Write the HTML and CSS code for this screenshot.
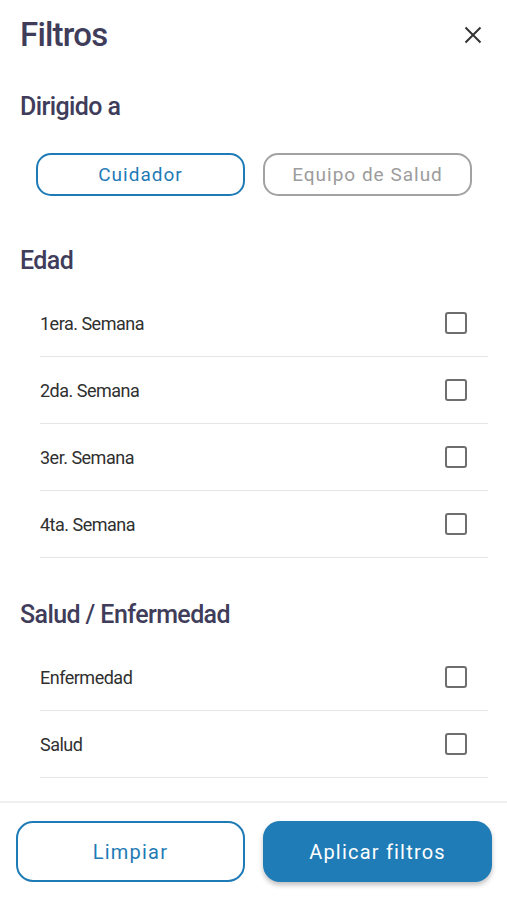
FILE: index.html
```html
<!DOCTYPE html>
<html lang="es">
<head>
<meta charset="utf-8">
<title>Filtros</title>
<link rel="stylesheet" href="styles.css">
</head>
<body>
<div class="page">
  <main class="content">
    <header class="header">
      <h1 class="title">Filtros</h1>
      <button class="close" aria-label="Cerrar">
        <svg width="18" height="18" viewBox="0 0 18 18"><path d="M1.5 1.5L16.5 16.5M16.5 1.5L1.5 16.5" stroke="#333" stroke-width="2" stroke-linecap="butt" fill="none"/></svg>
      </button>
    </header>

    <section class="section">
      <h2 class="heading">Dirigido a</h2>
      <div class="pills">
        <button class="pill pill-active">Cuidador</button>
        <button class="pill">Equipo de Salud</button>
      </div>
    </section>

    <section class="section section-edad">
      <h2 class="heading">Edad</h2>
      <ul class="list">
        <li class="row"><span>1era. Semana</span><span class="check"></span></li>
        <li class="row"><span>2da. Semana</span><span class="check"></span></li>
        <li class="row"><span>3er. Semana</span><span class="check"></span></li>
        <li class="row"><span>4ta. Semana</span><span class="check"></span></li>
      </ul>
    </section>

    <section class="section section-salud">
      <h2 class="heading">Salud / Enfermedad</h2>
      <ul class="list">
        <li class="row"><span>Enfermedad</span><span class="check"></span></li>
        <li class="row"><span>Salud</span><span class="check"></span></li>
      </ul>
    </section>
  </main>

  <footer class="footer">
    <button class="btn btn-outline">Limpiar</button>
    <button class="btn btn-fill">Aplicar filtros</button>
  </footer>
</div>
</body>
</html>
```

FILE: styles.css
```css
* { box-sizing: border-box; }
html, body { margin: 0; padding: 0; background: #fff; }
body {
  font-family: Roboto, "Liberation Sans", sans-serif;
  color: #333;
}
.page {
  height: 100vh;
  display: flex;
  flex-direction: column;
}
.content {
  flex: 1;
  padding: 15px 19px 0 20px;
}
.header {
  display: flex;
  align-items: center;
  justify-content: space-between;
  height: 40px;
}
.title {
  margin: 0;
  font-size: 33px;
  line-height: 40px;
  font-weight: 500;
  letter-spacing: -0.8px;
  color: #403d5b;
}
.close {
  border: 0;
  background: none;
  padding: 0;
  margin-right: 6px;
  width: 18px;
  height: 18px;
  display: flex;
}
.section { margin-top: 37px; }
.section-edad { margin-top: 50px; }
.section-salud { margin-top: 42px; }
.heading {
  margin: 0;
  font-size: 25px;
  line-height: 30px;
  font-weight: 500;
  letter-spacing: -0.6px;
  color: #403d5b;
}
.pills {
  display: grid;
  grid-template-columns: 1fr 1fr;
  gap: 18px;
  margin: 31px 16px 0;
}
.pill {
  height: 43px;
  border-radius: 15px;
  border: 2px solid #a2a2a2;
  background: #fff;
  font-family: Roboto, "Liberation Sans", sans-serif;
  font-size: 19px;
  letter-spacing: 1px;
  color: #9c9c9c;
  padding: 0;
}
.pill-active {
  border-color: #1f7bb6;
  color: #1f7bb6;
}
.list {
  list-style: none;
  margin: 14px 0 0;
  padding: 0 0 0 20px;
}
.row {
  height: 67px;
  display: flex;
  align-items: center;
  justify-content: space-between;
  border-bottom: 1px solid #e6e6e6;
  padding-right: 21px;
  font-size: 18px;
  color: #2f2f2f;
  letter-spacing: -0.5px;
}
.check {
  width: 22px;
  height: 22px;
  border: 2px solid #6e6e6e;
  border-radius: 3px;
}
.footer {
  border-top: 2px solid #efefef;
  display: grid;
  grid-template-columns: 1fr 1fr;
  gap: 18px;
  padding: 18px 15px 18px 16px;
}
.btn {
  height: 61px;
  border-radius: 17px;
  font-family: Roboto, "Liberation Sans", sans-serif;
  font-size: 20px;
  letter-spacing: 1.2px;
  padding: 0;
}
.btn-outline {
  border: 2px solid #1f7bb6;
  background: #fff;
  color: #1f7bb6;
}
.btn-fill {
  border: 0;
  background: #1f7cb7;
  color: #fff;
  box-shadow: 0 3px 5px rgba(0, 0, 0, 0.25);
}
```
